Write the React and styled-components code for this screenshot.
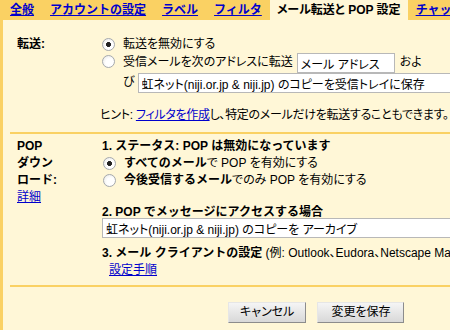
import { createGlobalStyle } from "styled-components"
import styled from "styled-components"

const yellow = "#fad163"
const cream = "#fff7d7"

const Global = createGlobalStyle`
  body {
    margin: 0;
    background: ${cream};
    font-family: "Liberation Sans", "Noto Sans CJK JP", sans-serif;
    font-size: 12px;
    font-feature-settings: "palt";
    color: #000;
  }
`

const Page = styled.div`
  width: 450px;
  height: 330px;
  overflow: hidden;
`

const TabBar = styled.div`
  display: flex;
  background: ${yellow};
  height: 20px;
  padding-left: 2px;
  white-space: nowrap;
`

const Tab = styled.a`
  padding: 0 ${p => (p.$active ? "7px" : "8px")};
  line-height: 20px;
  font-weight: bold;
  font-feature-settings: ${p => (p.$active ? '"palt"' : "normal")};
  color: ${p => (p.$active ? "#000" : "#0000cc")};
  text-decoration: ${p => (p.$active ? "none" : "underline")};
  background: ${p => (p.$active ? cream : "transparent")};
  flex-shrink: 0;
`

const Panel = styled.div`
  border-left: 3px solid ${yellow};
  background: ${cream};
  height: 310px;
  box-sizing: border-box;
`

const Section = styled.div`
  display: grid;
  grid-template-columns: 92px 1fr;
  padding: ${p => p.$pad};
  margin-left: 7px;
  border-bottom: 2px solid ${yellow};
  line-height: 17px;
  white-space: nowrap;
`

const Label = styled.div`
  font-weight: bold;
  font-feature-settings: normal;
  padding-left: 7px;
`

const Content = styled.div`
  min-width: 0;
`

const Option = styled.label`
  display: flex;
  align-items: flex-start;
`

const Radio = styled.input.attrs({ type: "radio" })`
  appearance: none;
  width: 13px;
  height: 13px;
  margin: 2px 8px 0 ${p => p.$inset || "0"};
  border: 1px solid #a5a9ae;
  border-radius: 50%;
  box-sizing: border-box;
  flex-shrink: 0;
  background: radial-gradient(circle at 60% 60%, #ffffff 40%, #e4e4e0 100%);
  &:checked {
    background: radial-gradient(circle, #222 0 2.2px, transparent 2.7px),
      radial-gradient(circle at 60% 60%, #ffffff 40%, #e4e4e0 100%);
  }
`

const Field = styled.input.attrs({ readOnly: true })`
  font: inherit;
  font-feature-settings: "palt";
  display: ${p => (p.$block ? "block" : "inline-block")};
  height: 20px;
  box-sizing: border-box;
  border: 1px solid #b8b8b8;
  background: #fff;
  padding: 0 3px;
  margin: ${p => p.$margin || "0"};
  width: ${p => p.$w};
  vertical-align: middle;
  color: #000;
  outline: none;
`

const Wrap = styled.div`
  line-height: 19px;
`

const Hint = styled.div`
  margin-top: 14px;
  margin-left: -2px;
  letter-spacing: -0.3px;
`

const Link = styled.a`
  color: #0000cc;
  text-decoration: underline;
  font-weight: normal;
  font-feature-settings: "palt";
`

const Heading = styled.div`
  font-weight: bold;
  font-feature-settings: normal;
  margin-top: ${p => p.$top || "0"};
`

const Strong = styled.b`
  font-feature-settings: normal;
`

const Note = styled.span`
  font-weight: normal;
  font-feature-settings: "palt";
`

const Indent = styled.div`
  padding-left: 7px;
`

const Buttons = styled.div`
  display: flex;
  align-items: flex-start;
  gap: 11px;
  padding: 15px 0 0 225px;
`

const Button = styled.button`
  font: inherit;
  font-feature-settings: "palt";
  height: 21px;
  line-height: 19px;
  padding: 0 ${p => p.$pad || "11px"};
  color: #000;
  border: 1px solid;
  border-color: #e6e6e6 #8c8c8c #8c8c8c #e6e6e6;
  background: linear-gradient(#f5f5f5, #d8d8d8);
`

export default function App() {
  return (
    <Page>
      <Global />
      <TabBar>
        <Tab>全般</Tab>
        <Tab>アカウントの設定</Tab>
        <Tab>ラベル</Tab>
        <Tab>フィルタ</Tab>
        <Tab $active>メール転送と POP 設定</Tab>
        <Tab>チャット</Tab>
      </TabBar>
      <Panel>
        <Section $pad="16px 0 8px 0">
          <Label>転送:</Label>
          <Content>
            <Option>
              <Radio name="fwd" defaultChecked />
              <span>転送を無効にする</span>
            </Option>
            <Option>
              <Radio name="fwd" />
              <Wrap>
                受信メールを次のアドレスに転送
                <Field $w="98px" $margin="0 5px 0 4px" defaultValue="メール アドレス" />
                およ
                <br />
                び
                <Field $w="330px" $margin="0 0 0 3px" defaultValue="虹ネット(niji.or.jp & niji.jp) のコピーを受信トレイに保存" />
              </Wrap>
            </Option>
            <Hint>
              ヒント: <Link>フィルタを作成</Link>し、特定のメールだけを転送することもできます。
            </Hint>
          </Content>
        </Section>
        <Section $pad="4px 0 6px 0">
          <Label>
            POP
            <br />
            ダウン
            <br />
            ロード:
            <br />
            <Link>詳細</Link>
          </Label>
          <Content>
            <Heading>1. ステータス: POP は無効になっています</Heading>
            <Option>
              <Radio name="pop" defaultChecked $inset="1px" />
              <span>
                <Strong>すべてのメール</Strong>で POP を有効にする
              </span>
            </Option>
            <Option>
              <Radio name="pop" $inset="1px" />
              <span>
                <Strong>今後受信するメール</Strong>でのみ POP を有効にする
              </span>
            </Option>
            <Heading $top="15px">2. POP でメッセージにアクセスする場合</Heading>
            <Field $block $w="360px" $margin="-3px 0 0 0" defaultValue="虹ネット(niji.or.jp & niji.jp) のコピーを アーカイブ" />
            <Heading $top="7px">
              3. メール クライアントの設定 <Note>(例: Outlook、Eudora、Netscape Mail)</Note>
            </Heading>
            <Indent>
              <Link>設定手順</Link>
            </Indent>
          </Content>
        </Section>
        <Buttons>
          <Button>キャンセル</Button>
          <Button $pad="13px">変更を保存</Button>
        </Buttons>
      </Panel>
    </Page>
  )
}
